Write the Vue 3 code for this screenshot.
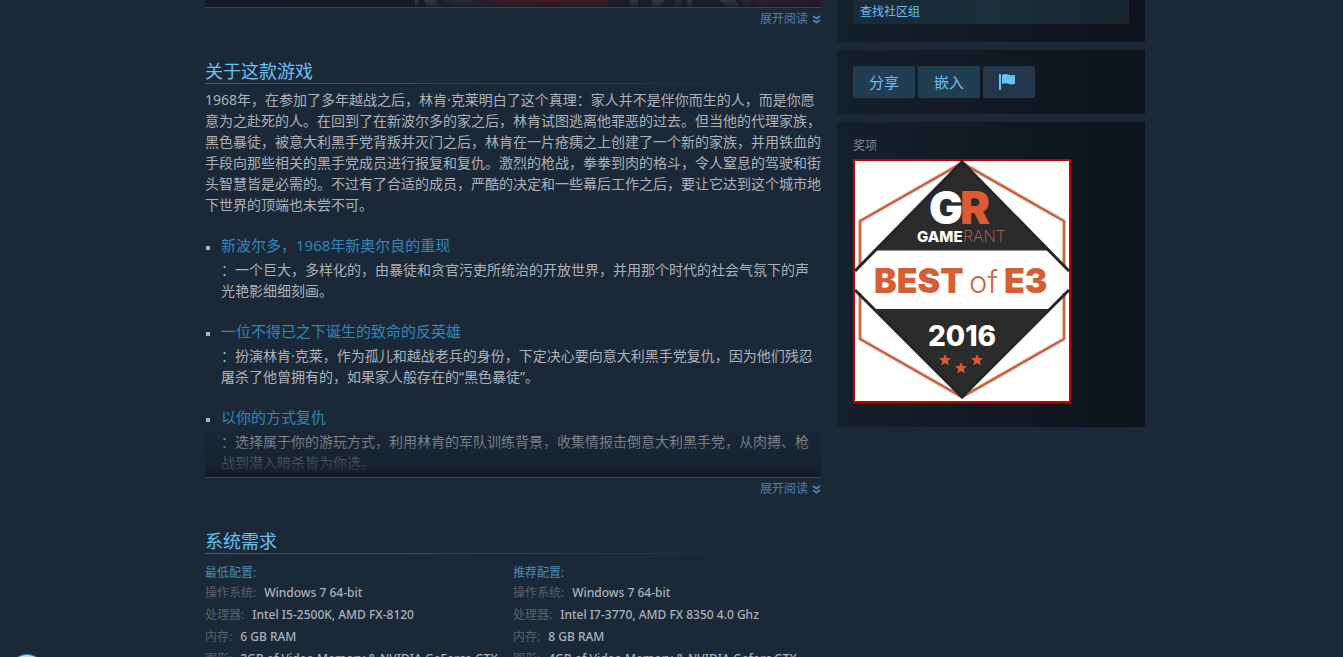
<script setup>
const features = [
  {
    title: '新波尔多，1968年新奥尔良的重现',
    text: '：一个巨大，多样化的，由暴徒和贪官污吏所统治的开放世界，并用那个时代的社会气氛下的声光艳影细细刻画。',
  },
  {
    title: '一位不得已之下诞生的致命的反英雄',
    text: '：扮演林肯·克莱，作为孤儿和越战老兵的身份，下定决心要向意大利黑手党复仇，因为他们残忍屠杀了他曾拥有的，如果家人般存在的“黑色暴徒”。',
  },
  {
    title: '以你的方式复仇',
    text: '：选择属于你的游玩方式，利用林肯的军队训练背景，收集情报击倒意大利黑手党，从肉搏、枪战到潜入暗杀皆为你选。',
  },
]

const requirements = [
  {
    title: '最低配置:',
    rows: [
      ['操作系统:', 'Windows 7 64-bit'],
      ['处理器:', 'Intel I5-2500K, AMD FX-8120'],
      ['内存:', '6 GB RAM'],
      ['图形:', '2GB of Video Memory & NVIDIA GeForce GTX'],
    ],
  },
  {
    title: '推荐配置:',
    rows: [
      ['操作系统:', 'Windows 7 64-bit'],
      ['处理器:', 'Intel I7-3770, AMD FX 8350 4.0 Ghz'],
      ['内存:', '8 GB RAM'],
      ['图形:', '4GB of Video Memory & NVIDIA Geforc GTX'],
    ],
  },
]

const starPath = 'M0 -6 L1.7 -2 L6 -1.8 L2.7 1 L3.8 5.2 L0 2.9 L-3.8 5.2 L-2.7 1 L-6 -1.8 L-1.7 -2 Z'
</script>

<template>
  <div class="page">
    <div class="content">
      <main class="main">
        <section class="promo">
          <svg class="promo-art" viewBox="0 0 616 7" preserveAspectRatio="none" aria-hidden="true">
            <defs>
              <linearGradient id="promoBase" x1="0" x2="1" y1="0" y2="0">
                <stop offset="0" stop-color="#151b26" />
                <stop offset="0.35" stop-color="#171b26" />
                <stop offset="0.41" stop-color="#2a1b25" />
                <stop offset="0.55" stop-color="#481b22" />
                <stop offset="0.65" stop-color="#3f1b23" />
                <stop offset="0.66" stop-color="#191d28" />
                <stop offset="0.88" stop-color="#1b1c27" />
                <stop offset="0.9" stop-color="#30202a" />
                <stop offset="1" stop-color="#251b25" />
              </linearGradient>
              <linearGradient id="promoShade" x1="0" x2="0" y1="0" y2="1">
                <stop offset="0" stop-color="#141b26" stop-opacity="0" />
                <stop offset="1" stop-color="#141b26" stop-opacity="0.8" />
              </linearGradient>
            </defs>
            <rect width="616" height="7" fill="url(#promoBase)" />
            <path d="M210 0h4l-1 7h-3z M219 0h12l4 7h-13z M425 0h8v7h-9z M447 0h12l-3 7h-9z M482 0h5v7h-6z M515 0h15l5 7h-15z" fill="#323743" />
            <path d="M238 0h30l22 7h-36z M469 0h8v7h-8z M538 0h8l-3 7h-5z" fill="#282b36" />
            <rect width="616" height="7" fill="url(#promoShade)" />
          </svg>
        </section>
        <div class="more-row">
          <button class="more" type="button">
            展开阅读
            <svg class="chevrons" viewBox="0 0 9 9" aria-hidden="true">
              <path d="M1 1 L4.5 3.6 L8 1 M1 5 L4.5 7.6 L8 5" />
            </svg>
          </button>
        </div>

        <section class="about">
          <h2 class="heading">关于这款游戏</h2>
          <div class="collapse">
            <p class="intro">1968年，在参加了多年越战之后，林肯·克莱明白了这个真理：家人并不是伴你而生的人，而是你愿意为之赴死的人。在回到了在新波尔多的家之后，林肯试图逃离他罪恶的过去。但当他的代理家族，黑色暴徒，被意大利黑手党背叛并灭门之后，林肯在一片疮痍之上创建了一个新的家族，并用铁血的手段向那些相关的黑手党成员进行报复和复仇。激烈的枪战，拳拳到肉的格斗，令人窒息的驾驶和街头智慧皆是必需的。不过有了合适的成员，严酷的决定和一些幕后工作之后，要让它达到这个城市地下世界的顶端也未尝不可。</p>
            <ul class="features">
              <li v-for="item in features" :key="item.title" class="feature">
                <h3 class="feature-title">{{ item.title }}</h3>
                <p class="feature-text">{{ item.text }}</p>
              </li>
            </ul>
            <div class="fade"></div>
          </div>
          <div class="more-row">
            <button class="more" type="button">
              展开阅读
              <svg class="chevrons" viewBox="0 0 9 9" aria-hidden="true">
                <path d="M1 1 L4.5 3.6 L8 1 M1 5 L4.5 7.6 L8 5" />
              </svg>
            </button>
          </div>
        </section>

        <section class="system">
          <h2 class="heading">系统需求</h2>
          <div class="columns">
            <div v-for="column in requirements" :key="column.title" class="column">
              <h3 class="column-title">{{ column.title }}</h3>
              <dl class="specs">
                <div v-for="row in column.rows" :key="row[0]" class="spec">
                  <dt class="spec-name">{{ row[0] }}</dt>
                  <dd class="spec-value">{{ row[1] }}</dd>
                </div>
              </dl>
            </div>
          </div>
        </section>
      </main>

      <aside class="side">
        <div class="panel panel-links">
          <a class="group-link" href="#">查找社区组</a>
        </div>
        <div class="panel panel-actions">
          <button class="action" type="button">分享</button>
          <button class="action" type="button">嵌入</button>
          <button class="action flag" type="button" aria-label="flag">
            <svg class="flag-icon" viewBox="0 0 16 16" aria-hidden="true">
              <path d="M0 0H2V16H0Z M3 1C5 0 7 -0.3 9 0.6C11 1.5 13 1.4 16 0.7V9.7C14 10.4 12 10.7 10 10C7.5 9 5.5 9 3 9.8Z" />
            </svg>
          </button>
        </div>
        <div class="panel panel-awards">
          <div class="awards-title">奖项</div>
          <svg class="award" viewBox="0 0 218 244" role="img" aria-label="GameRant Best of E3 2016">
            <rect width="218" height="244" fill="#c40000" />
            <rect x="2" y="2" width="214" height="240" fill="#fff" />
            <path d="M7 108V62L109 4L211 62V108 M7 134V180L109 238L211 180V134" fill="none" stroke="#c9694a" stroke-width="3" />
            <path d="M109 2L196 91.5H23Z M22 150H197L109 239.5Z" fill="#2a2b2b" />
            <path d="M2 112L109 3L216 112 M2 131L109 238L216 131" fill="none" stroke="#242626" stroke-width="3" />
            <text class="logo" x="76" y="65" font-size="45" fill="#fff">G</text>
            <text class="logo" x="107" y="65" font-size="45" fill="#dc5b33">R</text>
            <text class="brand" x="64" y="83" font-size="15" font-weight="800" fill="#fff">GAME</text>
            <text class="brand" x="110" y="83" font-size="16" font-weight="200" fill="#c9694a">RANT</text>
            <text class="logo" x="21" y="134" font-size="34" fill="#d55f33">BEST</text>
            <text class="brand" x="116" y="134" font-size="31" font-weight="300" fill="#c9694a">of</text>
            <text class="logo" x="151" y="134" font-size="34" fill="#d55f33">E3</text>
            <text class="brand" x="109" y="187" text-anchor="middle" font-size="28" font-weight="800" fill="#fff">2016</text>
            <g fill="#dc5b33">
              <path :d="starPath" transform="translate(92 201)" />
              <path :d="starPath" transform="translate(108 209)" />
              <path :d="starPath" transform="translate(124 201)" />
            </g>
          </svg>
        </div>
      </aside>
    </div>
    <div class="bubble"></div>
  </div>
</template>

<style>
body {
  margin: 0;
  background: #1b2838;
}
</style>

<style scoped>
.page {
  box-sizing: border-box;
  height: 100vh;
  overflow: hidden;
  padding-left: 7px;
  background: #1b2838;
  color: #acb2b8;
  font-family: "Noto Sans", "Noto Sans CJK SC", sans-serif;
  font-size: 14px;
  line-height: 21px;
}
.content {
  display: flex;
  align-items: flex-start;
  gap: 16px;
  max-width: 940px;
  margin: 0 auto;
}
.main {
  flex: 1;
  min-width: 0;
}
.side {
  display: flex;
  flex-direction: column;
  gap: 8px;
  width: 308px;
}
h2, h3, p, ul, dl, dd {
  margin: 0;
  padding: 0;
  font-weight: 400;
}
button {
  border: 0;
  padding: 0;
  font-family: inherit;
  cursor: pointer;
}
.promo {
  border-bottom: 1px solid #2f475a;
}
.promo-art {
  display: block;
  width: 100%;
  height: 7px;
}
.more-row {
  display: flex;
  justify-content: flex-end;
  height: 22px;
}
.more {
  display: flex;
  align-items: center;
  gap: 4px;
  background: none;
  color: #4f7fae;
  font-size: 12px;
  line-height: 22px;
}
.chevrons {
  width: 9px;
  height: 9px;
  fill: none;
  stroke: currentColor;
  stroke-width: 2;
}
.about, .system {
  padding-top: 30px;
}
.heading {
  height: 23px;
  padding-bottom: 1px;
  margin-bottom: 5px;
  background: linear-gradient(to right, #366080, #2d4a5f 40%, rgba(45, 74, 95, 0) 92%) bottom / 100% 1px no-repeat;
  color: #67c1f5;
  font-size: 18px;
  line-height: 22px;
}
.collapse {
  position: relative;
  height: 388px;
  overflow: hidden;
  border-bottom: 1px solid #2f475a;
}
.features {
  padding-left: 16px;
  list-style: none;
}
.feature {
  position: relative;
  padding-top: 20px;
}
.feature::before {
  content: "";
  position: absolute;
  left: -15px;
  top: 31px;
  width: 4px;
  height: 4px;
  background: #acb2b8;
}
.feature-title {
  margin-bottom: 3px;
  color: #2f89bc;
  font-size: 15px;
  line-height: 21px;
}
.fade {
  position: absolute;
  right: 0;
  bottom: 0;
  left: 0;
  height: 56px;
  background: linear-gradient(to bottom, rgba(27, 40, 56, 0), rgba(22, 32, 45, 0.75) 80%, #121923);
}
.columns {
  display: flex;
  padding-top: 4px;
}
.column {
  flex: 1;
  min-width: 0;
}
.column-title {
  color: #448fb4;
  font-size: 12px;
  line-height: 20px;
}
.specs {
  margin-top: -1px;
}
.spec {
  display: flex;
  gap: 8px;
  line-height: 22px;
  white-space: nowrap;
}
.spec-name {
  color: #596269;
  font-size: 12px;
}
.spec-value {
  font-size: 12px;
  font-weight: 500;
}
.panel {
  padding: 16px;
  background: linear-gradient(to right, #16202b, #121923 50%, #0d131a);
}
.panel-links {
  padding-top: 0;
  padding-bottom: 18px;
}
.group-link {
  display: block;
  padding: 0 7px;
  border-radius: 0 0 2px 2px;
  background: linear-gradient(to right, #1a2a38, #1b2e3a 50%, #172530);
  color: #67c1f5;
  font-size: 12px;
  line-height: 24px;
  text-decoration: none;
}
.panel-actions {
  display: flex;
  gap: 3px;
}
.action {
  width: 62px;
  height: 32px;
  border-radius: 2px;
  background: #213d51;
  color: #67c1f5;
  font-size: 15px;
  line-height: 30px;
}
.flag {
  display: flex;
  align-items: center;
  width: 52px;
  padding-left: 16px;
  background: #22374b;
}
.flag-icon {
  width: 16px;
  height: 16px;
  fill: #67c1f5;
}
.panel-awards {
  padding-top: 13px;
  padding-bottom: 24px;
}
.awards-title {
  padding-bottom: 2px;
  color: #7f8790;
  font-size: 12px;
  line-height: 22px;
}
.award {
  display: block;
  width: 218px;
  height: 244px;
}
.logo {
  font-family: Inter, Lato, sans-serif;
  font-weight: 900;
}
.brand {
  font-family: Inter, Lato, sans-serif;
}
.bubble {
  position: fixed;
  bottom: -33px;
  left: 9px;
  box-sizing: border-box;
  width: 36px;
  height: 36px;
  border: 1px solid #2c7fae;
  border-radius: 50%;
  background: #c5d9e6;
}
</style>
